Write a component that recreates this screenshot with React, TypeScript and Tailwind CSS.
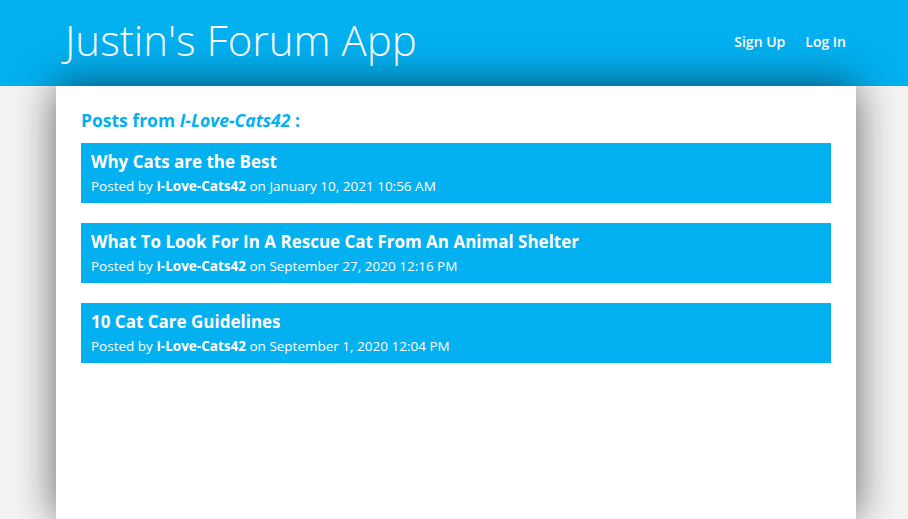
import React from "react";

const posts = [
  { title: "Why Cats are the Best", author: "I-Love-Cats42", date: "January 10, 2021 10:56 AM" },
  { title: "What To Look For In A Rescue Cat From An Animal Shelter", author: "I-Love-Cats42", date: "September 27, 2020 12:16 PM" },
  { title: "10 Cat Care Guidelines", author: "I-Love-Cats42", date: "September 1, 2020 12:04 PM" },
];

export default function App() {
  return (
    <div className="min-h-screen bg-[#f4f4f4] font-['Open_Sans',sans-serif] flex flex-col">
      {/* HEADER */}
      <header className="bg-[#03b0f0] h-[86px] flex items-center justify-between pl-[65px] pr-[62px]">
        <h1 className="text-white text-[42px] font-light leading-none pb-[6px]">Justin's Forum App</h1>
        <nav className="flex items-center gap-5 text-white text-[14px] font-semibold pb-[4px]">
          <a href="#">Sign Up</a>
          <a href="#">Log In</a>
        </nav>
      </header>

      {/* CONTENT */}
      <main className="relative ml-[56px] w-[800px] flex-1 bg-white shadow-[0_0_40px_rgba(0,0,0,0.6)] px-[25px] pt-[22px] pb-10">
        <h2 className="text-[#03b0f0] text-[17.5px] font-bold mb-[11px] leading-6">
          Posts from <i>I-Love-Cats42</i> :
        </h2>
        <div className="flex flex-col gap-5">
          {posts.map((p) => (
            <div key={p.title} className="bg-[#03b0f0] h-[60px] px-[10px] pt-[7px] text-white">
              <div className="text-[17px] font-bold leading-6">{p.title}</div>
              <div className="text-[13.5px] leading-5 mt-[2px]">
                Posted by <b>{p.author}</b> on {p.date}
              </div>
            </div>
          ))}
        </div>
      </main>
    </div>
  );
}
